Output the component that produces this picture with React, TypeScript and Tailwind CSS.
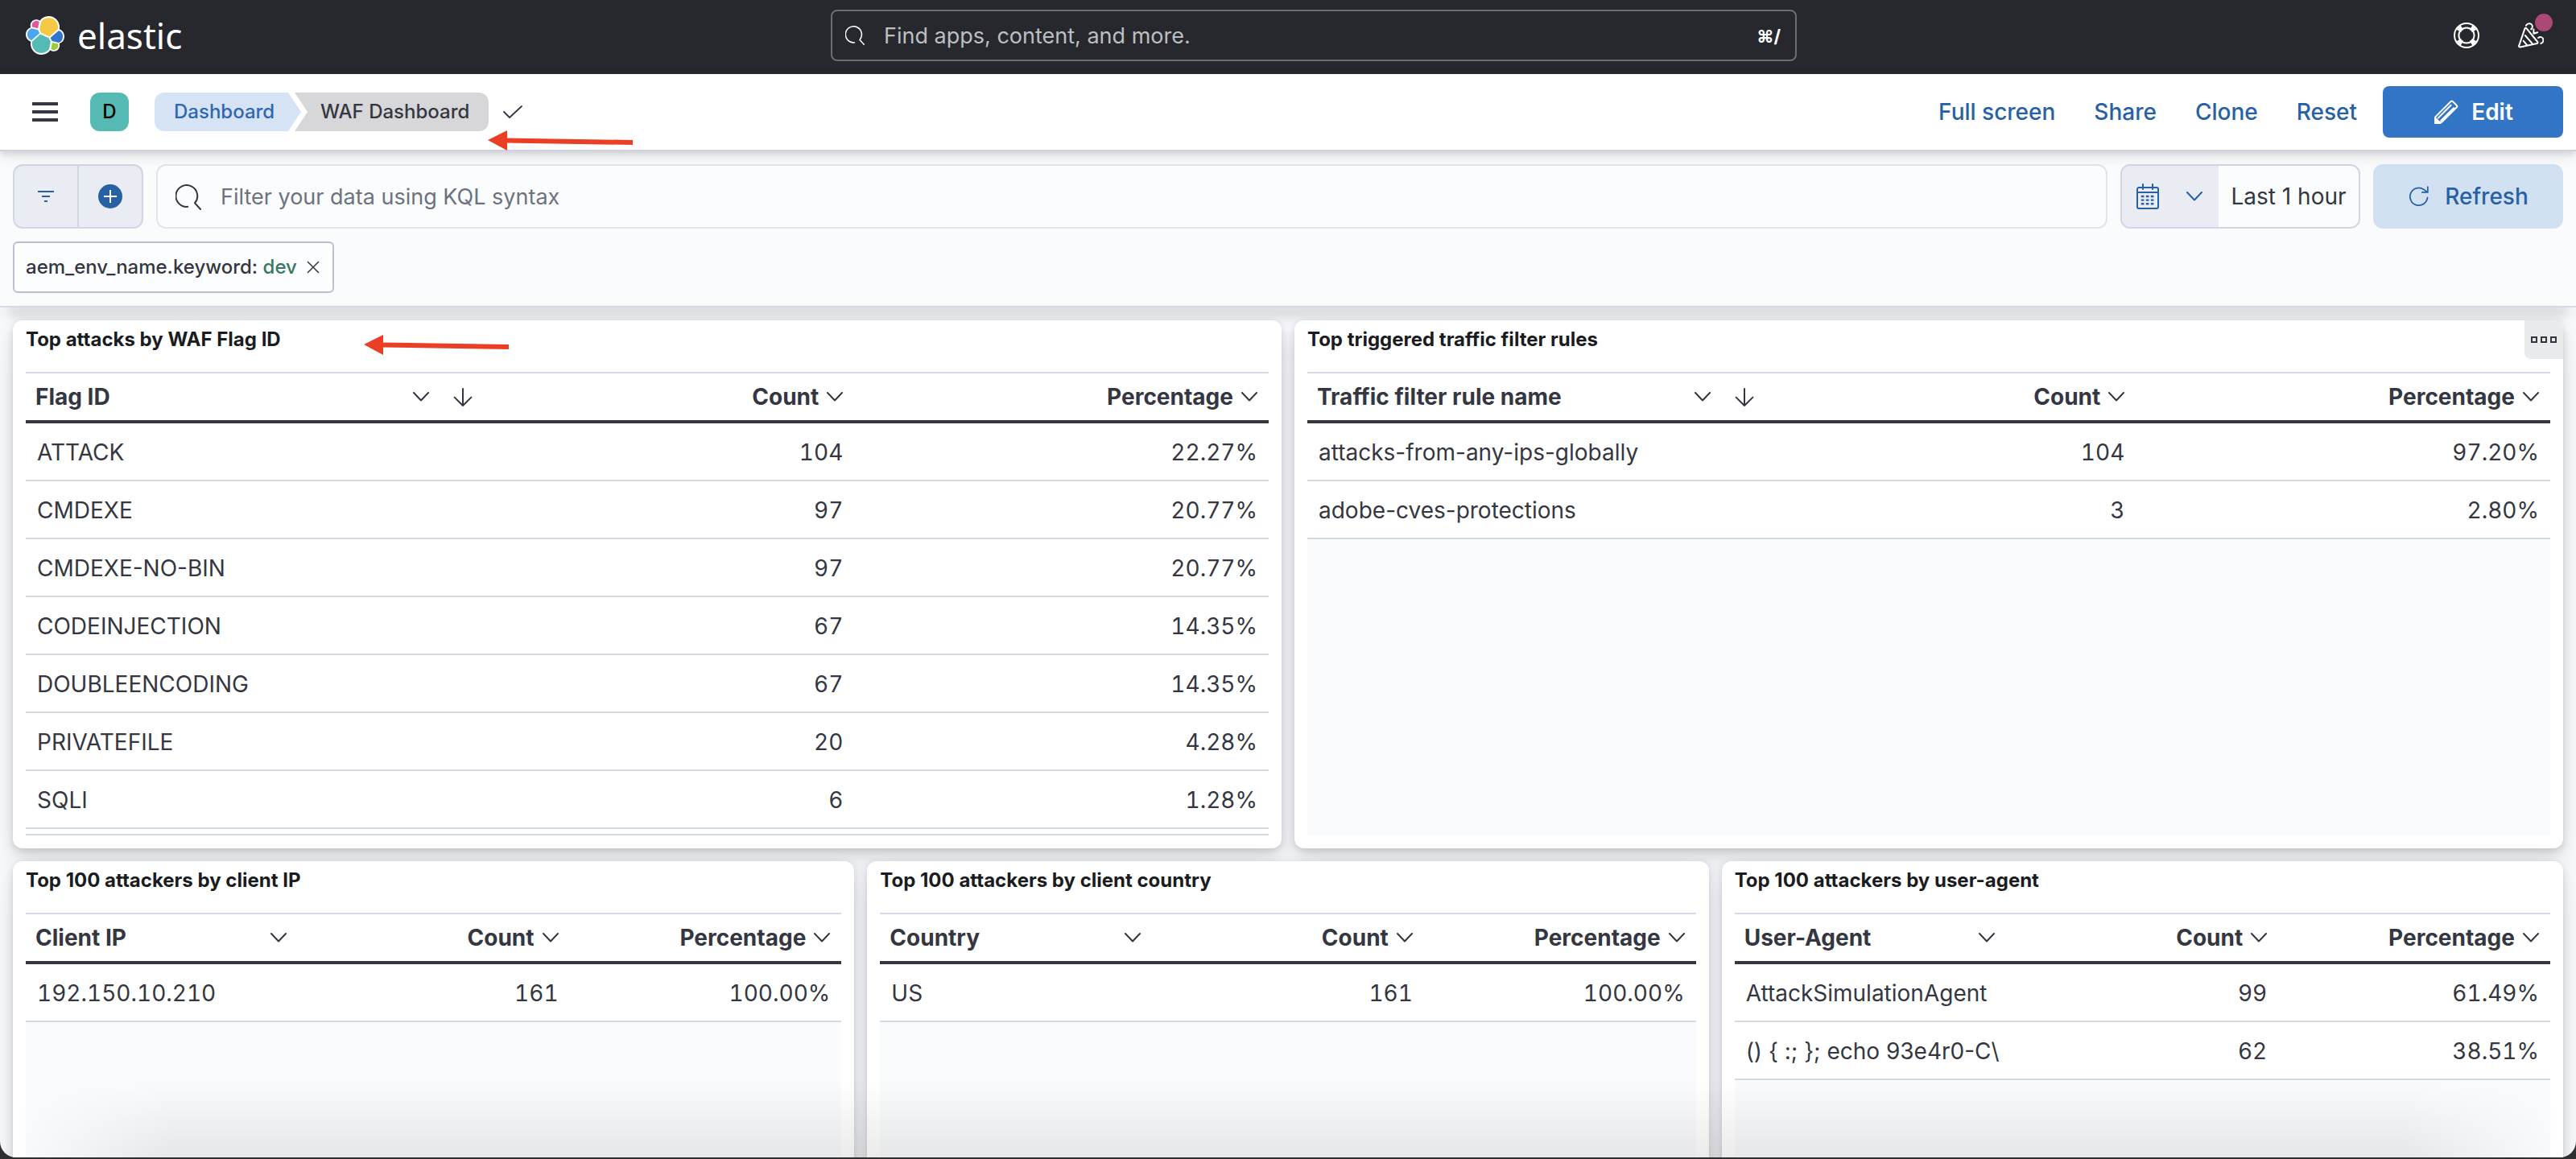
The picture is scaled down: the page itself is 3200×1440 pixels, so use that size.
import type { ReactNode } from "react";

type IconProps = { className?: string };

function ElasticLogo({ className }: IconProps) {
  return (
    <svg viewBox="0 0 32 32" className={className} aria-hidden="true">
      <path fill="#fff" d="M32 16.77c0-2.68-1.66-5.03-4.16-5.94.11-.58.16-1.16.16-1.77C28 4.06 23.95 0 18.96 0c-2.92 0-5.62 1.4-7.33 3.77-.84-.65-1.87-1-2.96-1a4.83 4.83 0 0 0-4.82 4.83c0 .58.1 1.15.3 1.67A6.36 6.36 0 0 0 0 15.23c0 2.69 1.67 5.05 4.18 5.95-.11.56-.17 1.16-.17 1.77 0 4.97 4.04 9.02 9.01 9.02 2.92 0 5.62-1.41 7.32-3.78.84.66 1.88 1.02 2.96 1.02a4.83 4.83 0 0 0 4.82-4.83c0-.58-.1-1.14-.3-1.66A6.37 6.37 0 0 0 32 16.77" />
      <path fill="#f5c846" d="M12.58 13.787l7.002 3.211 7.066-6.211a7.849 7.849 0 0 0 .152-1.557c0-4.287-3.473-7.76-7.742-7.76a7.756 7.756 0 0 0-6.4 3.376l-1.16 6.1z" />
      <path fill="#56bab4" d="M5.333 21.228c-.1.506-.152 1.03-.152 1.56 0 4.3 3.493 7.8 7.79 7.8 2.58 0 5-1.28 6.45-3.42l1.15-6.03-1.53-2.94-7.03-3.2z" />
      <path fill="#df5a9a" d="M5.288 9.067l4.8 1.137L11.14 4.72a3.785 3.785 0 0 0-6.067 3.026c0 .447.074.892.215 1.32" />
      <path fill="#4ba6f2" d="M4.872 10.214c-2.14.713-3.594 2.77-3.594 5.03 0 2.198 1.357 4.157 3.4 4.94l6.73-6.1-1.235-2.65z" />
      <path fill="#9dc93c" d="M20.87 27.35a3.752 3.752 0 0 0 2.28.78 3.786 3.786 0 0 0 3.57-5.1l-4.79-1.12z" />
      <path fill="#3274c7" d="M21.85 20.73l5.28 1.23a5.37 5.37 0 0 0 3.6-5.04 5.29 5.29 0 0 0-3.41-4.93l-6.91 6.06z" />
    </svg>
  );
}

function Svg({ className, children, width = 1 }: { className?: string; children: ReactNode; width?: number }) {
  return (
    <svg viewBox="0 0 16 16" className={className} fill="none" stroke="currentColor" strokeWidth={width} strokeLinecap="round" strokeLinejoin="round" aria-hidden="true">
      {children}
    </svg>
  );
}

function SearchIcon({ className }: IconProps) {
  return (
    <Svg className={className}>
      <path d="M7.6 13.9A6.7 6.7 0 1 1 12 11.6l3.5 3.9" />
    </Svg>
  );
}

function ChevronDown() {
  return (
    <svg viewBox="0 0 20 12" className="h-3 w-5" fill="none" stroke="currentColor" strokeWidth="2" strokeLinecap="round" strokeLinejoin="round" aria-hidden="true">
      <path d="M1 1l9 9.500L19 1" />
    </svg>
  );
}

function SortDown({ className }: IconProps) {
  return (
    <Svg className={className}>
      <path d="M8 3v10.500M2.800 8.300L8 13.500l5.200-5.200" />
    </Svg>
  );
}

function HelpIcon({ className }: IconProps) {
  return (
    <Svg className={className}>
      <circle cx="8" cy="8" r="7.5" />
      <circle cx="8" cy="8" r="4.8" />
      <path d="M2.2 4l2.2 1.4M4 2.2l1.4 2.2M12 2.2l-1.4 2.2M13.8 4l-2.2 1.4M2.2 12l2.2-1.4M4 13.8l1.4-2.2M12 13.8l-1.4-2.2M13.8 12l-2.2-1.4" />
      <path strokeWidth="1.6" d="M3.2 3.2l1.3 1.3M12.8 3.2l-1.3 1.3M3.2 12.8l1.3-1.3M12.8 12.8l-1.3-1.3" />
    </Svg>
  );
}

function CheerIcon({ className }: IconProps) {
  return (
    <Svg className={className}>
      <path d="M4.2 3.8L.6 14.4a.6.6 0 0 0 .8.8l10.4-2.2a.6.6 0 0 0 .3-1L5.2 3.6a.6.6 0 0 0-1 .2zM3.400 11.400l2.200 2.700M4.400 8l4.600 5.200" />
      <path d="M5 1.9c.6-1.2 2.2-1.700 3.2-.9 1 .8 1 2.4-.1 3.2M12.600 9.500c1-.9 2.700-.5 3 .8.3 1.200-.3 2.400-1.400 2.700M9.700 4.300v2.600M9.700 6.900l2.400-.800" />
    </Svg>
  );
}

function PencilIcon({ className }: IconProps) {
  return (
    <Svg className={className}>
      <path d="M11.3 1.5a.8.8 0 0 1 1.1 0l2.500 2.500a.8.8 0 0 1 0 1.100L5.600 14.400l-4.100.5.1-3.700zM11.300 3.900L3.400 11.800M13 5.600L5.100 13.500" />
      <path fill="currentColor" d="M1.600 11.800l3.200 3.200H1.600z" />
    </Svg>
  );
}

function CalendarIcon({ className }: IconProps) {
  return (
    <Svg className={className}>
      <path d="M2.500 2.500h11a1 1 0 0 1 1 1v11a1 1 0 0 1-1 1h-11a1 1 0 0 1-1-1v-11a1 1 0 0 1 1-1zM1.500 5.500h13M5 .5v3M11 .5v3" />
      <path strokeWidth="1.200" strokeLinecap="butt" strokeDasharray="1.800 1.200" d="M3.900 8h8M3.900 10.300h8M3.900 12.600h8" />
    </Svg>
  );
}

function RefreshIcon({ className }: IconProps) {
  return (
    <Svg className={className}>
      <path d="M14 8.800A6.200 6.200 0 1 1 11.200 3l2.600 1.800M14.200 1.200v3.900h-4" />
    </Svg>
  );
}

function RedArrow({ className }: IconProps) {
  return (
    <svg viewBox="0 0 180 26" className={className} aria-hidden="true">
      <path fill="#ea3f25" d="M0 12L24 0v25z" />
      <path stroke="#ea3f25" strokeWidth="6" d="M22 12.500L180 15" />
    </svg>
  );
}

type Row = [string, string, string];

function HeadCell({ label }: { label: string }) {
  return (
    <div className="flex items-center justify-end gap-[10px]">
      <span>{label}</span>
      <button type="button" aria-label={`${label} options`}>
        <ChevronDown />
      </button>
    </div>
  );
}

function Panel({
  title,
  first,
  rows,
  sorted = false,
  menu = false,
  full = false,
  numeric = false,
}: {
  title: string;
  first: string;
  rows: Row[];
  sorted?: boolean;
  menu?: boolean;
  full?: boolean;
  numeric?: boolean;
}) {
  return (
    <section className="relative flex min-w-0 flex-col rounded-xl bg-white px-4 pb-4 shadow-[0_2px_8px_rgba(0,0,0,0.09),0_5px_16px_rgba(0,0,0,0.07),0_10px_24px_rgba(0,0,0,0.05),0_24px_30px_rgba(0,0,0,0.05)]">
      <h2 className="mb-4 flex h-12 items-center text-2xl font-bold text-[#1a1c21]">{title}</h2>
      {menu && (
        <button type="button" aria-label="Panel options" className="absolute top-0 right-0 flex h-12 w-12 items-center justify-center gap-1 rounded-tr-xl rounded-bl-lg bg-[#e9eaec]">
          <span className="size-2 border-2 border-[#343741]" />
          <span className="size-2 border-2 border-[#343741]" />
          <span className="size-2 border-2 border-[#343741]" />
        </button>
      )}
      <div className={full ? "flex-1 border-t-2 border-b-2 border-[#d3dae6] bg-white pb-[6px]" : "flex-1 border-t-2 border-[#d3dae6] bg-[#fafbfd]"}>
        <table className="w-full table-fixed border-separate border-spacing-0 text-[28px] leading-8 text-[#343741]">
          <thead>
            <tr className="h-[62px] bg-white">
              <th className="border-b-4 border-[#343741] pr-[14px] pl-3 text-left font-bold">
                <div className="flex items-center justify-between">
                  <span>{first}</span>
                  <button type="button" aria-label={`${first} options`}>
                    <ChevronDown />
                  </button>
                </div>
              </th>
              <th className="border-b-4 border-[#343741] pr-[14px] pl-3 font-bold">
                <div className="flex items-center justify-between">
                  {sorted ? <SortDown className="size-8" /> : <span />}
                  <HeadCell label="Count" />
                </div>
              </th>
              <th className="border-b-4 border-[#343741] pr-[14px] pl-3 font-bold">
                <HeadCell label="Percentage" />
              </th>
            </tr>
          </thead>
          <tbody>
            {rows.map(([name, count, pct]) => (
              <tr key={name} className="h-[72px] bg-white">
                <td className="border-b-2 border-[#d3dae6] pt-[2px] pl-[14px] whitespace-nowrap">
                  <span className={numeric ? "tabular-nums" : undefined}>{name}</span>
                </td>
                <td className="border-b-2 border-[#d3dae6] px-[14px] pt-[2px] text-right tabular-nums">{count}</td>
                <td className="border-b-2 border-[#d3dae6] px-[14px] pt-[2px] text-right tabular-nums">{pct}</td>
              </tr>
            ))}
          </tbody>
        </table>
      </div>
    </section>
  );
}

const flags: Row[] = [
  ["ATTACK", "104", "22.27%"],
  ["CMDEXE", "97", "20.77%"],
  ["CMDEXE-NO-BIN", "97", "20.77%"],
  ["CODEINJECTION", "67", "14.35%"],
  ["DOUBLEENCODING", "67", "14.35%"],
  ["PRIVATEFILE", "20", "4.28%"],
  ["SQLI", "6", "1.28%"],
];

const rules: Row[] = [
  ["attacks-from-any-ips-globally", "104", "97.20%"],
  ["adobe-cves-protections", "3", "2.80%"],
];

export default function App() {
  return (
    <div className="h-screen bg-[#2e2e30] pb-[2px] font-['Inter',sans-serif] text-[#343741]">
      <div className="relative flex h-full flex-col overflow-hidden rounded-b-[20px] bg-[#f7f8fc]">
        <header className="grid h-[92px] shrink-0 grid-cols-[1fr_1200px_936px] items-center bg-[#27282d] px-8 pb-1">
          <a href="#home" className="flex items-center gap-4 text-white">
            <ElasticLogo className="size-12" />
            <span className="font-['Noto_Sans',sans-serif] text-[44px] leading-none">elastic</span>
          </a>
          <div className="flex h-16 items-center gap-6 rounded-lg border-2 border-[#6b6c70] pr-[18px] pl-4">
            <SearchIcon className="size-6 text-white" />
            <input type="text" aria-label="Find apps, content, and more." placeholder="Find apps, content, and more." className="min-w-0 flex-1 bg-transparent pt-[2px] text-[27px] outline-none placeholder:text-[#bdbec0]" />
            <kbd className="pt-[2px] font-['Inter','DejaVu_Sans',sans-serif] text-[22px] font-bold text-white">⌘/</kbd>
          </div>
          <div className="flex items-center justify-end gap-12 pr-2">
            <button type="button" aria-label="Help" className="text-white">
              <HelpIcon className="size-8" />
            </button>
            <button type="button" aria-label="News" className="relative text-white">
              <CheerIcon className="size-8" />
              <span className="absolute -top-[11px] -right-[11px] size-[22px] rounded-full bg-[#ab4876]" />
            </button>
          </div>
        </header>

        <div className="relative z-20 flex h-24 shrink-0 items-center border-b-2 border-[#cfd3df] bg-white px-4 shadow-[0_2px_8px_rgba(0,0,0,0.12),0_6px_18px_rgba(0,0,0,0.10)]">
          <button type="button" aria-label="Open navigation" className="ml-6 flex w-8 flex-col gap-[6px]">
            <span className="h-1 w-full bg-[#343741]" />
            <span className="h-1 w-full bg-[#343741]" />
            <span className="h-1 w-full bg-[#343741]" />
          </button>
          <button type="button" aria-label="Default space" className="ml-10 flex size-12 items-center justify-center rounded-xl bg-[#56bab4] text-2xl font-medium text-black">
            D
          </button>
          <nav aria-label="Breadcrumb" className="relative ml-8 flex items-center">
            <a href="#dashboards" className="flex h-12 w-[182px] items-center rounded-l-xl bg-[#d6e3f4] pl-6 text-2xl font-medium text-[#2f67b0] [clip-path:polygon(0_0,166px_0,100%_50%,166px_100%,0_100%)]">
              Dashboard
            </a>
            <span className="-ml-2 flex h-12 items-center rounded-r-xl bg-[#d7d7d9] pr-6 pl-8 text-2xl font-medium text-[#343741] [clip-path:polygon(0_0,100%_0,100%_100%,0_100%,16px_50%)]">
              WAF Dashboard
            </span>
            <RedArrow className="absolute top-[47px] left-[414px] h-[26px] w-[180px]" />
          </nav>
          <svg viewBox="0 0 24 16" className="ml-[18px] h-4 w-6" fill="none" stroke="#343741" strokeWidth="1.8" strokeLinecap="round" strokeLinejoin="round" aria-hidden="true">
            <path d="M1 8l7 7L23 1" />
          </svg>
          <div className="ml-auto flex items-center gap-12 text-[28px] font-medium text-[#2861a3]">
            <button type="button">Full screen</button>
            <button type="button">Share</button>
            <button type="button">Clone</button>
            <button type="button">Reset</button>
          </div>
          <button type="button" className="ml-8 flex h-16 w-56 items-center justify-center gap-4 rounded-lg bg-[#3275c6] text-[28px] font-semibold text-white">
            <PencilIcon className="size-8" />
            Edit
          </button>
        </div>

        <div className="relative z-10 flex h-[194px] shrink-0 flex-col gap-4 border-b-2 border-[#d3dae6] bg-[#fafbfd] px-4 pt-4">
          <div className="flex h-20 shrink-0 items-stretch gap-4">
            <div className="flex w-[162px] rounded-xl border-2 border-[#d2d6e4] bg-[#e9ecf2] text-[#2861a3]">
              <button type="button" aria-label="Saved queries" className="flex flex-1 items-center justify-center border-r-2 border-[#d2d6e4]">
                <svg viewBox="0 0 20 16" className="h-4 w-5" fill="none" stroke="currentColor" strokeWidth="2" aria-hidden="true">
                  <path d="M0 2h20M5 8h10M8 14h4" />
                </svg>
              </button>
              <button type="button" aria-label="Add filter" className="flex flex-1 items-center justify-center">
                <svg viewBox="0 0 30 30" className="size-[30px]" aria-hidden="true">
                  <circle cx="15" cy="15" r="15" fill="currentColor" />
                  <path d="M15 7v16M7 15h16" stroke="#fff" strokeWidth="2" />
                </svg>
              </button>
            </div>
            <div className="flex flex-1 items-center gap-6 rounded-xl border-2 border-[#e3e5ee] bg-[#fbfcfd] px-[22px] pt-[2px]">
              <SearchIcon className="size-8" />
              <input type="text" aria-label="Query" placeholder="Filter your data using KQL syntax" className="min-w-0 flex-1 bg-transparent text-[27px] outline-none placeholder:text-[#6c7280]" />
            </div>
            <div className="flex w-[298px] overflow-hidden rounded-xl border-2 border-[#d2d6e4] bg-[#fbfcfd]">
              <button type="button" aria-label="Date quick select" className="flex w-[120px] items-center justify-between bg-[#e9ecf2] px-4 pr-5 text-[#2861a3]">
                <CalendarIcon className="size-8" />
                <ChevronDown />
              </button>
              <button type="button" className="flex flex-1 items-center justify-center text-[28px] whitespace-nowrap">Last 1 hour</button>
            </div>
            <button type="button" className="flex w-[236px] items-center justify-center gap-[18px] rounded-xl bg-[#d1e1f1] text-[28px] font-medium text-[#2861a3]">
              <RefreshIcon className="size-7" />
              Refresh
            </button>
          </div>
          <div className="flex">
            <div className="flex h-16 items-center gap-3 rounded-md border-2 border-[#b9c0ce] bg-[#fcfdfe] pr-4 pl-[14px] text-2xl font-medium">
              <span>
                aem_env_name.keyword: <span className="text-[#387765]">dev</span>
              </span>
              <button type="button" aria-label="Remove filter">
                <svg viewBox="0 0 16 16" className="size-4" fill="none" stroke="currentColor" strokeWidth="1.5" aria-hidden="true">
                  <path d="M1 1l14 14M15 1L1 15" />
                </svg>
              </button>
            </div>
          </div>
        </div>

        <main className="flex min-h-0 flex-1 flex-col gap-4 px-4">
          <div className="h-0 shrink-0 rounded-full shadow-[0_4px_16px_6px_rgba(0,0,0,0.18)]" />
          <div className="relative grid shrink-0 grid-cols-2 gap-4">
            <Panel title="Top attacks by WAF Flag ID" first="Flag ID" rows={flags} sorted full />
            <Panel title="Top triggered traffic filter rules" first="Traffic filter rule name" rows={rules} sorted menu />
            <RedArrow className="absolute top-[18px] left-[436px] h-[26px] w-[180px]" />
          </div>
          <div className="-mb-8 grid flex-1 grid-cols-3 gap-4">
            <Panel title="Top 100 attackers by client IP" first="Client IP" rows={[["192.150.10.210", "161", "100.00%"]]} numeric />
            <Panel title="Top 100 attackers by client country" first="Country" rows={[["US", "161", "100.00%"]]} />
            <Panel
              title="Top 100 attackers by user-agent"
              first="User-Agent"
              rows={[
                ["AttackSimulationAgent", "99", "61.49%"],
                ["() { :; }; echo 93e4r0-C\\", "62", "38.51%"],
              ]}
            />
          </div>
        </main>
        <div className="pointer-events-none absolute inset-x-4 bottom-0 h-24 bg-gradient-to-t from-black/8 to-transparent [mask-image:linear-gradient(to_right,transparent,black_200px,black_calc(100%-200px),transparent)]" />
      </div>
    </div>
  );
}
